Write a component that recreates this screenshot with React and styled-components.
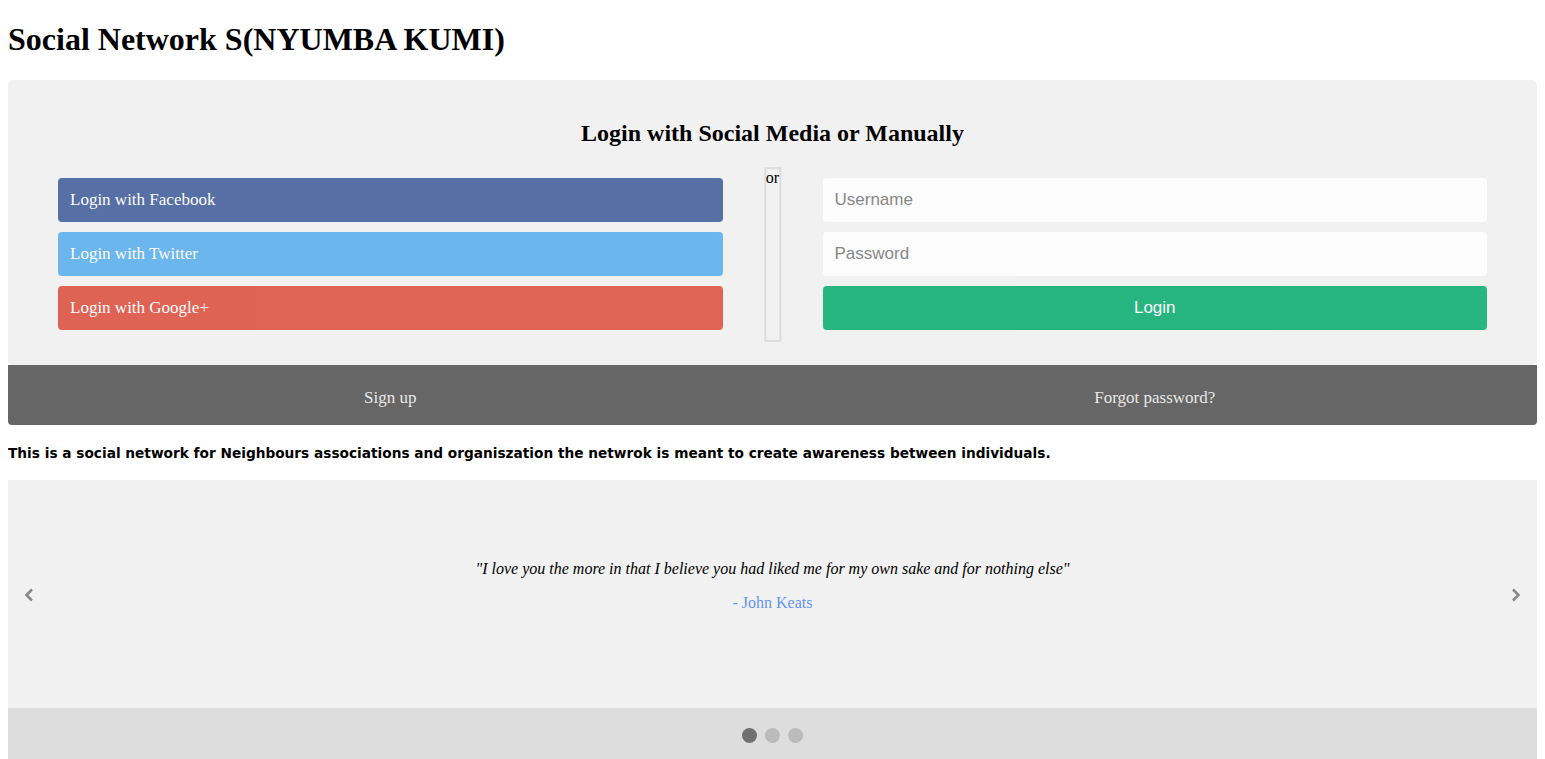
import React from "react";
import styled, { createGlobalStyle } from "styled-components";

const GlobalStyle = createGlobalStyle`
  * {
    box-sizing: border-box;
  }
  body {
    margin: 0 8px 8px;
    background: #fff;
    color: #000;
    font-family: "Liberation Serif", "Times New Roman", serif;
    font-size: 16px;
  }
`;

const PageTitle = styled.h1`
  font-size: 32px;
  font-weight: bold;
  margin: 21.44px 0;
`;

const LoginPanel = styled.div`
  position: relative;
  border-radius: 5px;
  background: #f1f1f1;
  padding: 20px 0 30px;
`;

const PanelHeading = styled.h2`
  font-size: 24px;
  text-align: center;
  margin: 0.83em 0;
`;

const Row = styled.div`
  position: relative;
  display: flex;
`;

const Column = styled.div`
  display: flex;
  flex-direction: column;
  width: 50%;
  padding: 0 50px;
  margin-top: 6px;
  text-align: ${({ $center }) => ($center ? "center" : "left")};
`;

const Divider = styled.div`
  position: absolute;
  left: 50%;
  top: 0;
  transform: translateX(-50%);
  height: 175px;
  border: 2px solid #ddd;
`;

const DividerText = styled.span`
  display: block;
  font-size: 16px;
  line-height: 18px;
`;

const SocialButton = styled.a`
  display: block;
  width: 100%;
  padding: 12px;
  margin: 5px 0;
  border-radius: 4px;
  opacity: 0.85;
  font-size: 17px;
  line-height: 20px;
  color: #fff;
  text-decoration: none;
  background: ${({ $bg }) => $bg};
`;

const TextInput = styled.input`
  display: block;
  width: 100%;
  padding: 12px;
  margin: 5px 0;
  border: none;
  border-radius: 4px;
  opacity: 0.85;
  background: #fff;
  font-family: "Liberation Sans", Arial, sans-serif;
  font-size: 17px;
  line-height: 20px;
  outline: none;
`;

const SubmitButton = styled.button`
  display: block;
  width: 100%;
  padding: 12px;
  margin: 5px 0;
  border: none;
  border-radius: 4px;
  opacity: 0.85;
  background: #04aa6d;
  color: #fff;
  font-family: "Liberation Sans", Arial, sans-serif;
  font-size: 17px;
  line-height: 20px;
  cursor: pointer;
`;

const BottomBar = styled.div`
  display: flex;
  background: #666;
  border-radius: 0 0 4px 4px;
`;

const FooterLink = styled.a`
  display: block;
  padding: 12px;
  margin: 5px 0;
  opacity: 0.85;
  color: #fff;
  font-size: 17px;
  line-height: 20px;
  text-decoration: none;
`;

const Intro = styled.p`
  margin: 18px 0 17px;
  font-family: "Comic Sans MS", "DejaVu Sans", sans-serif;
  font-weight: bold;
  font-size: 13.7px;
  line-height: 20px;
`;

const Slideshow = styled.div`
  position: relative;
  background: #f1f1f1;
`;

const Slide = styled.div`
  padding: 80px;
  text-align: center;
`;

const Quote = styled.span`
  font-style: italic;
`;

const Author = styled.p`
  margin: 16px 0;
  color: cornflowerblue;
`;

const Arrow = styled.a`
  position: absolute;
  top: 50%;
  ${({ $side }) => ($side === "right" ? "right: 0;" : "left: 0;")}
  margin-top: -22px;
  padding: 16px;
  cursor: pointer;
  user-select: none;

  svg {
    display: block;
  }
`;

const DotBar = styled.div`
  text-align: center;
  padding: 20px;
  background: #ddd;
`;

const Dot = styled.span`
  display: inline-block;
  width: 15px;
  height: 15px;
  margin: 0 2px;
  border-radius: 50%;
  background: ${({ $active }) => ($active ? "#717171" : "#bbb")};
  cursor: pointer;
`;

const Chevron = ({ dir }) => (
  <svg width="10" height="14" viewBox="0 0 10 14">
    <polyline
      points={dir === "left" ? "8,1.5 2.5,7 8,12.5" : "2,1.5 7.5,7 2,12.5"}
      fill="none"
      stroke="#888"
      strokeWidth="2.6"
    />
  </svg>
);

const socials = [
  { label: "Login with Facebook", bg: "#3b5998" },
  { label: "Login with Twitter", bg: "#55acee" },
  { label: "Login with Google+", bg: "#dd4b39" },
];

export default function App() {
  return (
    <>
      <GlobalStyle />
      <PageTitle>Social Network S(NYUMBA KUMI)</PageTitle>

      <LoginPanel>
        <PanelHeading>Login with Social Media or Manually</PanelHeading>
        <Row>
          <Divider>
            <DividerText>or</DividerText>
          </Divider>
          <Column>
            {socials.map((s) => (
              <SocialButton key={s.label} href="#" $bg={s.bg}>
                {s.label}
              </SocialButton>
            ))}
          </Column>
          <Column>
            <TextInput type="text" placeholder="Username" />
            <TextInput type="password" placeholder="Password" />
            <SubmitButton>Login</SubmitButton>
          </Column>
        </Row>
      </LoginPanel>

      <BottomBar>
        <Column $center>
          <FooterLink href="#">Sign up</FooterLink>
        </Column>
        <Column $center>
          <FooterLink href="#">Forgot password?</FooterLink>
        </Column>
      </BottomBar>

      <Intro>
        This is a social network for Neighbours associations and organiszation
        the netwrok is meant to create awareness between individuals.
      </Intro>

      <Slideshow>
        <Slide>
          <Quote>
            "I love you the more in that I believe you had liked me for my own
            sake and for nothing else"
          </Quote>
          <Author>- John Keats</Author>
        </Slide>
        <Arrow $side="left">
          <Chevron dir="left" />
        </Arrow>
        <Arrow $side="right">
          <Chevron dir="right" />
        </Arrow>
      </Slideshow>

      <DotBar>
        <Dot $active /> <Dot /> <Dot />
      </DotBar>
    </>
  );
}
